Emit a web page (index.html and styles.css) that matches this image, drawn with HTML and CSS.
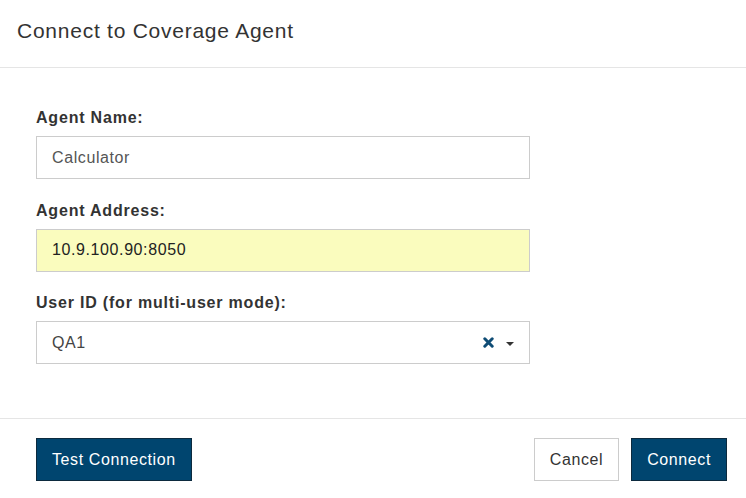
FILE: index.html
```html
<!DOCTYPE html>
<html lang="en">
<head>
    <meta charset="UTF-8">
    <title>Connect to Coverage Agent</title>
    <link rel="stylesheet" href="styles.css">
</head>
<body>

    <div class="dialog">
        <div class="dialog-header">
            <h1 class="dialog-title">Connect to Coverage Agent</h1>
        </div>

        <div class="dialog-body">
            <div class="form-group">
                <label class="field-label" for="agentName">Agent Name:</label>
                <input class="field" id="agentName" type="text" value="Calculator">
            </div>
            <div class="form-group">
                <label class="field-label" for="agentAddress">Agent Address:</label>
                <input class="field field-autofill" id="agentAddress" type="text" value="10.9.100.90:8050">
            </div>
            <div class="form-group">
                <label class="field-label">User ID (for multi-user mode):</label>
                <div class="field select-field">
                    <span class="select-value">QA1</span>
                    <span class="select-clear">
                        <svg width="11" height="11" viewBox="0 0 11 11">
                            <path d="M1.8 1.8 L9.2 9.2 M9.2 1.8 L1.8 9.2" stroke="#0f4c75" stroke-width="3" stroke-linecap="round"/>
                        </svg>
                    </span>
                    <span class="select-caret"></span>
                </div>
            </div>
        </div>

        <div class="dialog-footer">
            <button class="button button-primary">Test Connection</button>
            <div class="footer-right">
                <button class="button button-default">Cancel</button>
                <button class="button button-primary">Connect</button>
            </div>
        </div>
    </div>

</body>
</html>
```

FILE: styles.css
```css
body {
    margin: 0;
    font-family: "Liberation Sans", Arial, sans-serif;
    color: #333;
    background-color: #fff;
}
.dialog {
    width: 746px;
}
.dialog-header {
    height: 68px;
    box-sizing: border-box;
    border-bottom: 1px solid #e5e5e5;
    padding: 0 17px;
}
.dialog-title {
    margin: 0;
    padding-top: 16px;
    font-size: 21px;
    font-weight: normal;
    line-height: 30px;
    letter-spacing: 0.75px;
    color: #333;
}
.dialog-body {
    padding: 39px 216px 54px 36px;
}
.form-group {
    margin-bottom: 20.5px;
}
.form-group:last-child {
    margin-bottom: 0;
}
.field-label {
    display: block;
    font-size: 16px;
    font-weight: bold;
    line-height: 22px;
    letter-spacing: 0.8px;
    margin-bottom: 7px;
}
.field {
    display: block;
    width: 100%;
    height: 43px;
    box-sizing: border-box;
    border: 1px solid #ccc;
    padding: 0 15px;
    font-family: "Liberation Sans", Arial, sans-serif;
    font-size: 16px;
    letter-spacing: 0.6px;
    color: #555;
    background-color: #fff;
    margin: 0;
}
.field-autofill {
    background-color: #fafcbe;
    color: #222;
}
.select-field {
    display: flex;
    align-items: center;
}
.select-value {
    flex: 1;
    color: #444;
}
.select-clear {
    display: flex;
    margin-right: 12px;
}
.select-caret {
    width: 0;
    height: 0;
    border-left: 4px solid transparent;
    border-right: 4px solid transparent;
    border-top: 4px solid #333;
    margin-top: 2px;
}
.dialog-footer {
    display: flex;
    justify-content: space-between;
    border-top: 1px solid #e5e5e5;
    padding: 19px 19px 0 36px;
}
.footer-right {
    display: flex;
    gap: 12px;
}
.button {
    height: 43px;
    box-sizing: border-box;
    padding: 0 15px;
    font-family: "Liberation Sans", Arial, sans-serif;
    font-size: 16px;
    letter-spacing: 0.6px;
    border-radius: 0;
    cursor: pointer;
}
.button-primary {
    background-color: #00456f;
    color: #fff;
    border: 1px solid #0c2a3e;
}
.button-default {
    background-color: #fff;
    color: #333;
    border: 1px solid #ccc;
}
```
